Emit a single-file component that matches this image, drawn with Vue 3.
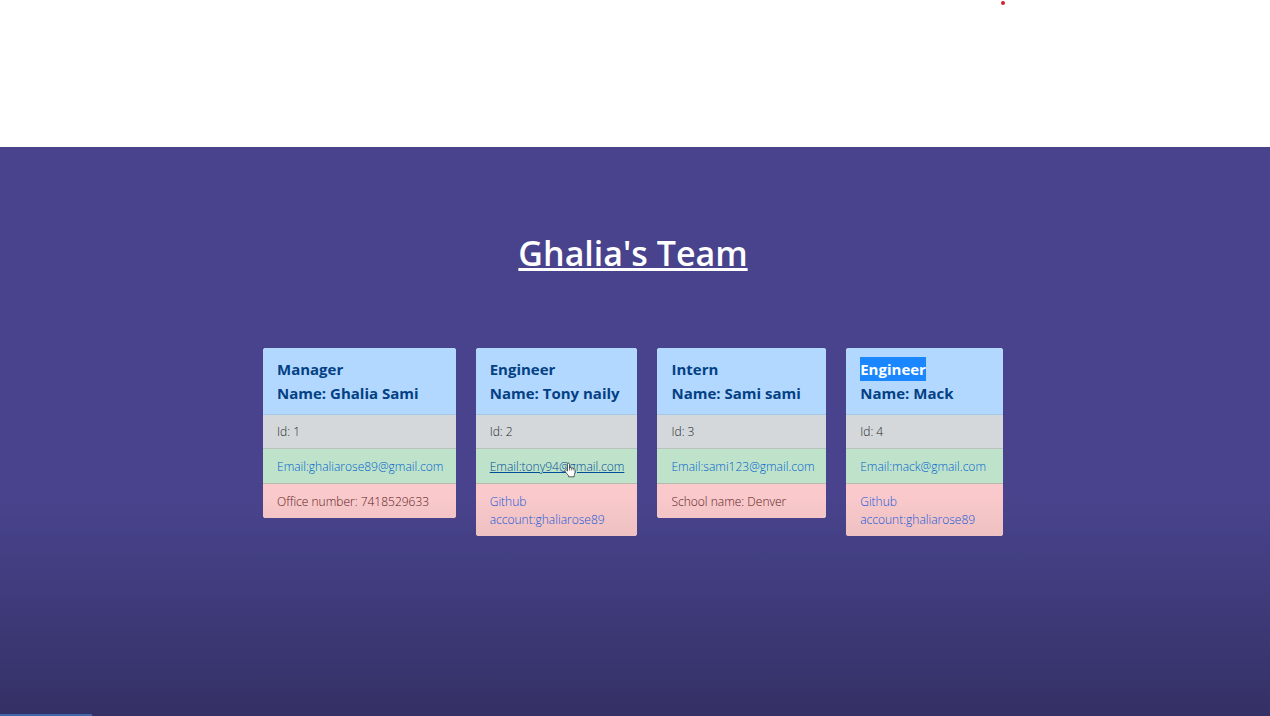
<script setup>
const members = [
  { role: 'Manager', name: 'Ghalia Sami', id: 1, email: 'ghaliarose89@gmail.com', extra: 'Office number: 7418529633' },
  { role: 'Engineer', name: 'Tony naily', id: 2, email: 'tony94@gmail.com', github: 'ghaliarose89', hovered: true },
  { role: 'Intern', name: 'Sami sami', id: 3, email: 'sami123@gmail.com', extra: 'School name: Denver' },
  { role: 'Engineer', name: 'Mack', id: 4, email: 'mack@gmail.com', github: 'ghaliarose89', selected: true },
]
</script>

<template>
  <div class="page">
    <div class="blank"><span class="dot"></span></div>
    <main class="team">
      <h1>Ghalia's Team</h1>
      <div class="cards">
        <article v-for="m in members" :key="m.id" class="card">
          <h2>
            <span :class="{ selected: m.selected }">{{ m.role }}</span><br />
            Name: {{ m.name }}
          </h2>
          <ul>
            <li class="id">Id: {{ m.id }}</li>
            <li class="email">
              <a :href="'mailto:' + m.email" :class="{ hovered: m.hovered }">Email:{{ m.email }}</a>
              <svg v-if="m.hovered" class="cursor" viewBox="0 0 12 16" aria-hidden="true">
                <path d="M3.5 9V2.2c0-1.6 2-1.6 2 0v4c.2-1 1.8-1 1.9.2.4-.9 1.7-.7 1.8.4.5-.8 1.8-.4 1.8.7v3.2c0 1.1-.8 1.8-.8 3v1.1H4.6v-1.1C3.7 12.500 2 11 1 9.200c-.8-1.300.7-2 1.500-1.100z" fill="#fff" stroke="#333" stroke-width=".8" stroke-linejoin="round" />
                <path d="M5.500 6v2.500M7.400 6.500v2M9.200 7v1.500" fill="none" stroke="#333" stroke-width=".6" />
              </svg>
            </li>
            <li class="extra">
              <a v-if="m.github" :href="'https://github.com/' + m.github">Github account:{{ m.github }}</a>
              <template v-else>{{ m.extra }}</template>
            </li>
          </ul>
        </article>
      </div>
      <div class="shade"></div>
      <div class="status"></div>
    </main>
  </div>
</template>

<style>
body {
  background: #fff;
}
</style>

<style scoped>
.page {
  min-height: 100vh;
  display: flex;
  flex-direction: column;
  font-family: "Segoe UI", "Open Sans", "Noto Sans", sans-serif;
  font-size: 12px;
  font-weight: 300;
  line-height: 18px;
}
.blank {
  position: relative;
  height: 147px;
}
.dot {
  position: absolute;
  top: 1px;
  right: 265px;
  width: 4px;
  height: 4px;
  border-radius: 50%;
  background: #d5202b;
}
.team {
  position: relative;
  flex: 1;
  box-sizing: border-box;
  padding: 79px 267px 40px 263px;
  background: #48438c;
}
h1 {
  margin: 0 0 68px;
  color: #fff;
  font-size: 34px;
  font-weight: 600;
  line-height: 54px;
  text-align: center;
  text-decoration: underline;
  text-decoration-thickness: 3px;
  text-decoration-skip-ink: none;
  text-underline-offset: 2px;
}
.cards {
  display: grid;
  grid-template-columns: minmax(0, 193fr) minmax(0, 162fr) minmax(0, 169fr) minmax(0, 157fr);
  align-items: start;
  gap: 20px;
}
.card {
  border-radius: 3px;
  background: #fff;
}
h2 {
  margin: 0;
  padding: 9px 14px;
  border-bottom: 1px solid #a5c7e6;
  border-radius: 3px 3px 0 0;
  background: #b3d8ff;
  color: #034184;
  font-size: 15px;
  font-weight: 700;
  line-height: 24px;
  white-space: nowrap;
}
.selected {
  display: inline-block;
  background: #1a86ff;
  color: #fff;
}
ul {
  margin: 0;
  padding: 0;
  list-style: none;
}
li {
  position: relative;
  padding: 9px 14px 7px;
}
.id {
  padding-top: 8px;
  border-bottom: 1px solid #b9c2be;
  background: #d4d8da;
  color: #23282e;
}
.email {
  border-bottom: 1px solid #bab9ae;
  background: #bfe3ca;
  white-space: nowrap;
}
.extra {
  border-radius: 0 0 3px 3px;
  background: #f9c9cb;
  color: #5e1c22;
}
a {
  color: #0062d0;
  text-decoration: none;
}
.extra a {
  color: #1458dc;
}
a.hovered {
  color: #004c98;
  text-decoration: underline;
}
.cursor {
  position: absolute;
  top: 13px;
  left: 88px;
  width: 12px;
  height: 16px;
}
.shade {
  position: absolute;
  right: 0;
  bottom: 0;
  left: 0;
  height: 220px;
  background: linear-gradient(rgba(0, 0, 0, 0), rgba(0, 0, 0, 0.06) 25%, rgba(0, 0, 0, 0.28));
  pointer-events: none;
}
.status {
  position: absolute;
  bottom: 0;
  left: 0;
  width: 92px;
  height: 2px;
  background: #4065a8;
}
</style>
